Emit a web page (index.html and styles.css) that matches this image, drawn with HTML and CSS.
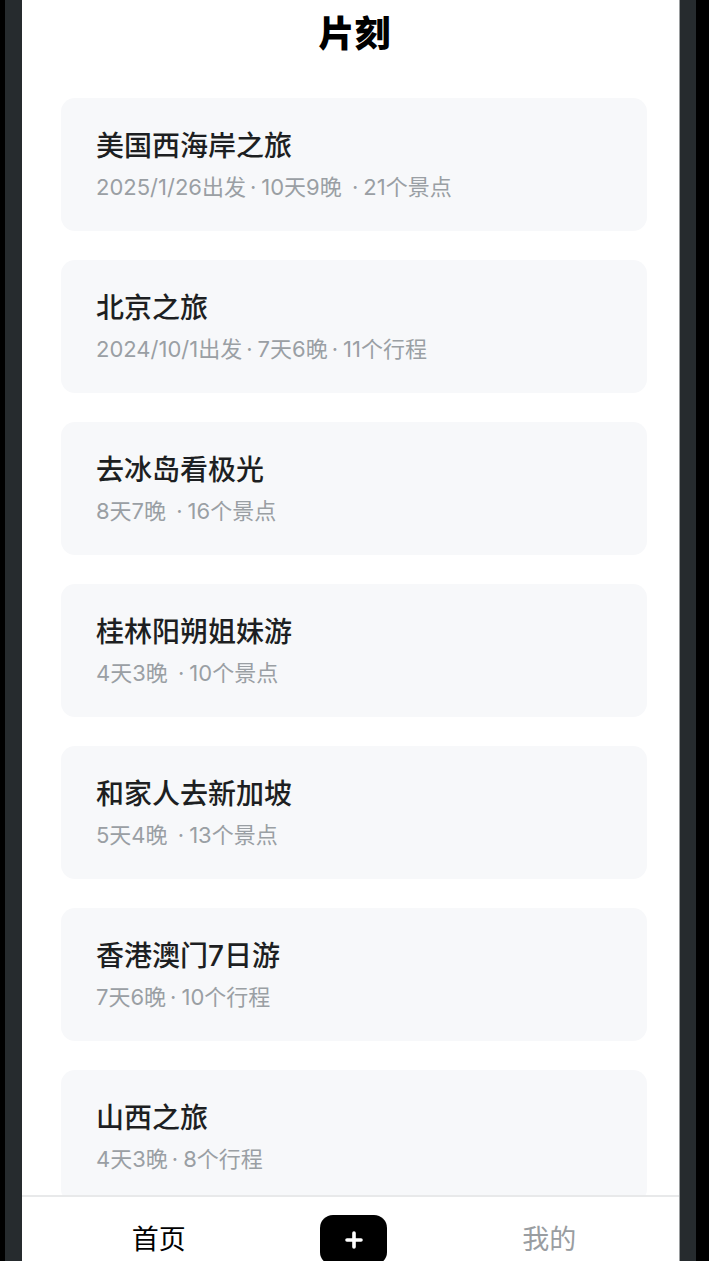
FILE: index.html
```html
<!doctype html>
<html lang="zh-CN">
  <head>
    <meta charset="utf-8">
    <title>片刻</title>
    <link rel="stylesheet" href="styles.css">
  </head>
  <body>
    <div id="device">
      <div id="screen">
        <div id="header">片刻</div>
        <div id="trip-list">
          <div class="trip-card">
            <div class="trip-title">美国西海岸之旅</div>
            <div class="trip-meta">2025/1/26出发<span class="dot">·</span>10天9晚 <span class="dot">·</span>21个景点</div>
          </div>
          <div class="trip-card">
            <div class="trip-title">北京之旅</div>
            <div class="trip-meta">2024/10/1出发<span class="dot">·</span>7天6晚<span class="dot">·</span>11个行程</div>
          </div>
          <div class="trip-card">
            <div class="trip-title">去冰岛看极光</div>
            <div class="trip-meta">8天7晚 <span class="dot">·</span>16个景点</div>
          </div>
          <div class="trip-card">
            <div class="trip-title">桂林阳朔姐妹游</div>
            <div class="trip-meta">4天3晚 <span class="dot">·</span>10个景点</div>
          </div>
          <div class="trip-card">
            <div class="trip-title">和家人去新加坡</div>
            <div class="trip-meta">5天4晚 <span class="dot">·</span>13个景点</div>
          </div>
          <div class="trip-card">
            <div class="trip-title">香港澳门7日游</div>
            <div class="trip-meta">7天6晚<span class="dot">·</span>10个行程</div>
          </div>
          <div class="trip-card">
            <div class="trip-title">山西之旅</div>
            <div class="trip-meta">4天3晚<span class="dot">·</span>8个行程</div>
          </div>
        </div>
        <div id="tab-bar">
          <div class="tab active">首页</div>
          <div class="tab">
            <button class="add-button">
              <svg width="20" height="20" viewBox="0 0 20 20">
                <path d="M10 3v14M3 10h14" stroke="#fff" stroke-width="3.6" stroke-linecap="round" fill="none" />
              </svg>
            </button>
          </div>
          <div class="tab">我的</div>
        </div>
      </div>
    </div>
  </body>
</html>
```

FILE: styles.css
```css
body,
html {
  height: 100%;
  margin: 0;
  background-color: #000;
  font-family: Inter, "Noto Sans CJK SC", sans-serif;
  overflow: hidden;
}

#device {
  width: 691px;
  height: 100%;
  margin-left: 5px;
  box-sizing: border-box;
  padding: 0 16px 0 17px;
  background-color: #262b2e;
}

#screen {
  position: relative;
  height: 100%;
  background-color: #fff;
  overflow: hidden;
  border-right: 1px solid #9a9d9f;
}

#header {
  height: 68px;
  line-height: 68px;
  text-align: center;
  font-size: 36px;
  font-weight: 900;
  color: #000;
  padding-left: 8px;
}

#trip-list {
  padding: 30px 32px 0 39px;
  display: flex;
  flex-direction: column;
  gap: 29px;
}

.trip-card {
  height: 133px;
  box-sizing: border-box;
  padding: 30px 35px 0;
  background-color: #f7f8fa;
  border-radius: 14px;
}

.trip-title {
  font-size: 28px;
  line-height: 36px;
  font-weight: 500;
  color: #1d1f22;
}

.trip-meta {
  margin-top: 8px;
  font-size: 22px;
  line-height: 30px;
  color: #9a9fa4;
}

.dot {
  margin: 0 5px 0 4px;
}

#tab-bar {
  position: absolute;
  left: 0;
  right: 0;
  bottom: 0;
  height: 66px;
  box-sizing: border-box;
  padding: 0 32px 0 39px;
  display: grid;
  grid-template-columns: repeat(3, 1fr);
  background-color: #fff;
  border-top: 2px solid #e8e9ea;
}

.tab {
  display: flex;
  justify-content: center;
  font-size: 27px;
  line-height: 86px;
  color: #999da1;
}

.tab.active {
  color: #000;
}

.add-button {
  margin-top: 18px;
  width: 67px;
  height: 50px;
  border: none;
  border-radius: 13px;
  background-color: #000;
  display: flex;
  align-items: center;
  justify-content: center;
  padding: 0;
}
```
